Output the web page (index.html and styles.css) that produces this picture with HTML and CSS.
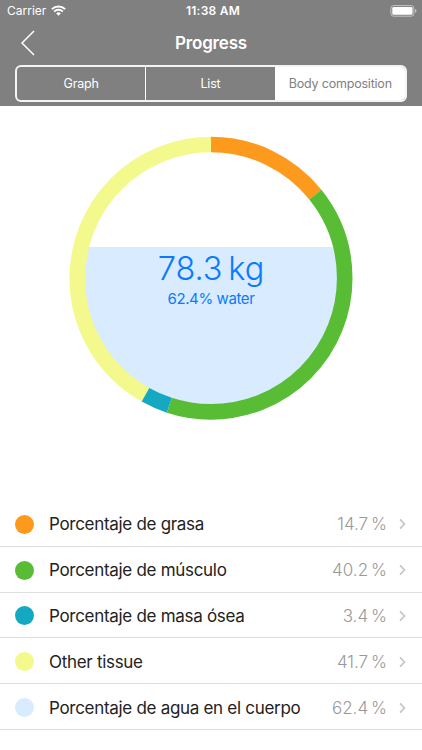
FILE: index.html
```html
<!DOCTYPE html>
<html lang="en">
<head>
    <meta charset="UTF-8">
    <meta name="viewport" content="width=device-width, initial-scale=1.0">
    <title>Progress</title>
    <link rel="stylesheet" href="styles.css">
</head>
<body>

    <header class="header">
        <div class="status-bar">
            <div class="carrier">
                <span>Carrier</span>
                <svg width="15" height="11" viewBox="0 0 15 11" fill="none" stroke="#fff" stroke-width="2">
                    <path d="M0.9 4.1a9.4 9.4 0 0 1 13.2 0"/>
                    <path d="M3.2 6.6a6.1 6.1 0 0 1 8.6 0"/>
                    <path d="M7.5 10.7L5.2 8.4a3.3 3.3 0 0 1 4.6 0z" fill="#fff" stroke="none"/>
                </svg>
            </div>
            <span class="time">11:38 AM</span>
            <svg class="battery" width="27" height="12" viewBox="0 0 27 12">
                <rect x="0.9" y="0.6" width="23" height="10.6" rx="2.6" fill="none" stroke="#c4c4c4" stroke-width="1"/>
                <rect x="2.3" y="2" width="20.2" height="7.8" rx="1.3" fill="#fff"/>
                <path d="M25 4.1q1.5 0.6 1.5 1.8t-1.5 1.8z" fill="#c4c4c4"/>
            </svg>
        </div>
        <div class="nav-bar">
            <svg class="back" width="14" height="26" viewBox="0 0 14 26" fill="none" stroke="#fff" stroke-width="1.5">
                <path d="M13 1L1 13l12 12"/>
            </svg>
            <h1>Progress</h1>
        </div>
        <div class="tabs">
            <button>Graph</button>
            <button>List</button>
            <button class="active">Body composition</button>
        </div>
    </header>

    <main>
        <div class="chart">
            <svg width="284" height="284" viewBox="0 0 284 284">
                <clipPath id="water-level">
                    <rect x="0" y="111" width="284" height="173"/>
                </clipPath>
                <circle class="water" cx="142" cy="142.2" r="128" clip-path="url(#water-level)"/>
                <g class="ring" transform="rotate(-90 142 142.2)">
                    <circle class="other" cx="142" cy="142.2" r="133.7" pathLength="100" stroke-dasharray="41.85 58.15" stroke-dashoffset="-58.15"/>
                    <circle class="fat" cx="142" cy="142.2" r="133.7" pathLength="100" stroke-dasharray="14.25 85.75"/>
                    <circle class="muscle" cx="142" cy="142.2" r="133.7" pathLength="100" stroke-dasharray="40.8 59.2" stroke-dashoffset="-14.25"/>
                    <circle class="bone" cx="142" cy="142.2" r="133.7" pathLength="100" stroke-dasharray="3.1 96.9" stroke-dashoffset="-55.05"/>
                </g>
            </svg>
            <div class="chart-label">
                <div class="weight">78.3 kg</div>
                <div class="water-text">62.4% water</div>
            </div>
        </div>

        <ul class="list">
            <li><span class="dot fat"></span><span class="name">Porcentaje de grasa</span><span class="value">14.7 %</span><svg class="arrow" width="7" height="12" viewBox="0 0 7 12"><path d="M1 1.4L5.5 6L1 10.6"/></svg></li>
            <li><span class="dot muscle"></span><span class="name">Porcentaje de músculo</span><span class="value">40.2 %</span><svg class="arrow" width="7" height="12" viewBox="0 0 7 12"><path d="M1 1.4L5.5 6L1 10.6"/></svg></li>
            <li><span class="dot bone"></span><span class="name">Porcentaje de masa ósea</span><span class="value">3.4 %</span><svg class="arrow" width="7" height="12" viewBox="0 0 7 12"><path d="M1 1.4L5.5 6L1 10.6"/></svg></li>
            <li><span class="dot other"></span><span class="name">Other tissue</span><span class="value">41.7 %</span><svg class="arrow" width="7" height="12" viewBox="0 0 7 12"><path d="M1 1.4L5.5 6L1 10.6"/></svg></li>
            <li><span class="dot water"></span><span class="name">Porcentaje de agua en el cuerpo</span><span class="value">62.4 %</span><svg class="arrow" width="7" height="12" viewBox="0 0 7 12"><path d="M1 1.4L5.5 6L1 10.6"/></svg></li>
        </ul>
    </main>

</body>
</html>
```
FILE: styles.css
```css
* {
    box-sizing: border-box;
}
body {
    margin: 0;
    font-family: Inter, sans-serif;
    background: #fff;
    color: #222;
}
.header {
    height: 106px;
    background: #808080;
    color: #fff;
}
.status-bar {
    display: grid;
    grid-template-columns: 1fr auto 1fr;
    align-items: center;
    height: 21px;
    padding: 0 5px 0 7px;
    font-size: 12px;
}
.carrier {
    display: flex;
    align-items: center;
    gap: 5px;
}
.time {
    padding-left: 2px;
    font-weight: 600;
    letter-spacing: 0.25px;
}
.battery {
    justify-self: end;
}
.nav-bar {
    display: grid;
    grid-template-columns: 1fr auto 1fr;
    align-items: center;
    height: 44px;
    padding: 0 21px;
}
h1 {
    margin: 0;
    font-size: 17px;
    font-weight: 600;
    letter-spacing: -0.2px;
}
.tabs {
    display: grid;
    grid-template-columns: 1fr 1fr 1fr;
    height: 37px;
    margin: 0 15px;
    border: 2px solid #f4f4f4;
    border-radius: 6px;
    overflow: hidden;
}
.tabs button {
    padding: 0;
    border: none;
    border-right: 1px solid #fff;
    background: none;
    color: #fff;
    font-family: inherit;
    font-size: 12.5px;
    letter-spacing: -0.2px;
}
.tabs .active {
    border-right: none;
    background: #fff;
    color: #808080;
}
.chart {
    display: grid;
    justify-items: center;
    height: 395px;
    padding-top: 30px;
}
.chart > * {
    grid-area: 1 / 1;
}
.ring circle {
    fill: none;
    stroke: currentColor;
    stroke-width: 15.6;
}
circle.water {
    fill: currentColor;
}
.fat {
    color: #fd9a1d;
}
.muscle {
    color: #58bd35;
}
.bone {
    color: #14a9c1;
}
.other {
    color: #f3f98c;
}
.water {
    color: #d9ebff;
}
.chart-label {
    padding-top: 113px;
    color: #0a7aff;
    text-align: center;
}
.weight {
    font-size: 32.5px;
    font-weight: 300;
    letter-spacing: -0.1px;
    word-spacing: -3px;
    line-height: 40px;
}
.water-text {
    font-size: 15px;
    letter-spacing: -0.4px;
    line-height: 19px;
}
.list {
    margin: 0;
    padding: 0;
    list-style: none;
}
.list li {
    display: flex;
    align-items: center;
    height: 45.8px;
    padding: 2px 16px 0 15px;
    border-bottom: 1px solid #dedee0;
    font-size: 17px;
}
.dot {
    width: 19px;
    height: 19px;
    margin-right: 15px;
    border-radius: 50%;
    background: currentColor;
}
.name {
    letter-spacing: -0.3px;
}
.value {
    margin-left: auto;
    margin-right: 12px;
    color: #999;
    font-weight: 300;
    word-spacing: -1.8px;
}
.arrow {
    fill: none;
    stroke: #c4c4c8;
    stroke-width: 1.6;
}
```
